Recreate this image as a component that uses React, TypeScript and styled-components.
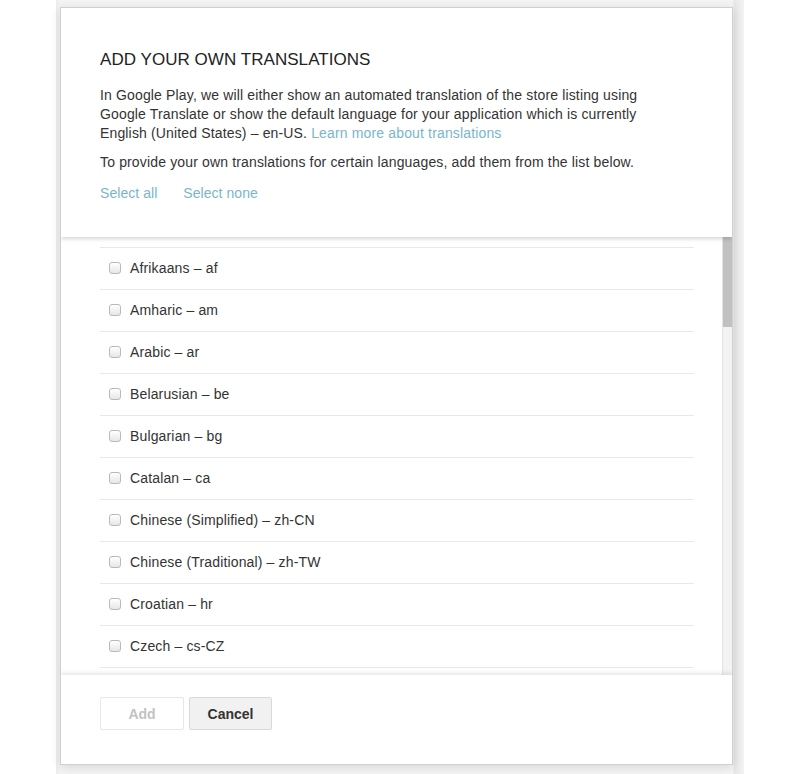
import React from "react";
import styled, { createGlobalStyle } from "styled-components";

const Global = createGlobalStyle`
  html, body { margin: 0; padding: 0; background: #ffffff; }
  body { font-family: "Liberation Sans", Arial, sans-serif; color: #333; }
  * { box-sizing: border-box; }
`;

const Page = styled.div`
  width: 800px;
  height: 774px;
  display: flex;
  background: #ffffff;
`;

const Backdrop = styled.div`
  margin-left: 56px;
  width: 688px;
  height: 774px;
  padding: 7px 11px 9px 4px;
  background: linear-gradient(90deg, #ececec 0px, #f4f4f4 4px, #f4f4f4 677px, #e6e6e6 678px, #f3f3f3 688px);
`;

const Dialog = styled.div`
  width: 673px;
  height: 758px;
  background: #fff;
  border: 1px solid #cfcfcf;
  box-shadow: 0 2px 10px rgba(0, 0, 0, 0.12);
  display: flex;
  flex-direction: column;
  overflow: hidden;
`;

const Header = styled.div`
  position: relative;
  z-index: 2;
  height: 229px;
  flex: none;
  padding: 41px 20px 0 39px;
  background: #fff;
  box-shadow: 0 2px 4px rgba(0, 0, 0, 0.16);
`;

const Title = styled.h1`
  margin: 0 0 15px;
  font-size: 17px;
  line-height: 22px;
  font-weight: normal;
  color: #222;
  letter-spacing: 0.05px;
`;

const Para = styled.p`
  margin: 0 0 10px;
  font-size: 14px;
  line-height: 19px;
  color: #333;
  letter-spacing: 0.15px;
  white-space: nowrap;
`;

const Link = styled.a`
  color: #7ab6c9;
  text-decoration: none;
  cursor: pointer;
`;

const SelectRow = styled.div`
  display: flex;
  gap: 26px;
  margin-top: 12px;
  font-size: 14px;
  line-height: 19px;
  letter-spacing: 0.05px;
`;

const Body = styled.div`
  flex: 1;
  min-height: 0;
  display: flex;
`;

const ListArea = styled.div`
  flex: 1;
  min-width: 0;
  overflow: hidden;
  padding: 10px 28px 0 39px;
`;

const Track = styled.div`
  width: 10px;
  flex: none;
  background: #f3f3f3;
  border-left: 1px solid #e4e4e4;
  display: flex;
  flex-direction: column;
`;

const Thumb = styled.div`
  height: 90px;
  background: #c1c1c1;
`;

const List = styled.ul`
  list-style: none;
  margin: 0;
  padding: 0;
  border-top: 1px solid #e8e8e8;
`;

const Row = styled.li`
  height: 42px;
  display: flex;
  align-items: center;
  gap: 9px;
  padding: 0 0 2px 9px;
  border-bottom: 1px solid #e8e8e8;
  font-size: 14px;
  color: #333;
  letter-spacing: 0.15px;
`;

const Box = styled.span`
  width: 12px;
  height: 12px;
  border-radius: 3px;
  border: 1px solid #b9b9b9;
  background: linear-gradient(#ffffff, #e6e6e6);
  box-shadow: inset 0 1px 1px rgba(255, 255, 255, 0.8);
  flex: none;
`;

const Footer = styled.div`
  position: relative;
  z-index: 2;
  height: 89px;
  flex: none;
  padding: 22px 39px 0;
  display: flex;
  align-items: flex-start;
  gap: 5px;
  background: #fff;
  box-shadow: 0 -2px 4px rgba(0, 0, 0, 0.1);
`;

const Button = styled.button<{ $disabled?: boolean }>`
  height: 33px;
  width: ${(p) => (p.$disabled ? "84px" : "83px")};
  font-family: "Liberation Sans", Arial, sans-serif;
  font-size: 14px;
  font-weight: bold;
  border-radius: 2px;
  border: 1px solid ${(p) => (p.$disabled ? "#e6e6e6" : "#d9d9d9")};
  background: ${(p) => (p.$disabled ? "#fff" : "#f1f1f1")};
  color: ${(p) => (p.$disabled ? "#c2c2c2" : "#333")};
  padding: 0;
`;

const languages = [
  "Afrikaans – af",
  "Amharic – am",
  "Arabic – ar",
  "Belarusian – be",
  "Bulgarian – bg",
  "Catalan – ca",
  "Chinese (Simplified) – zh-CN",
  "Chinese (Traditional) – zh-TW",
  "Croatian – hr",
  "Czech – cs-CZ",
];

export default function App() {
  return (
    <Page>
      <Global />
      <Backdrop>
        <Dialog>
          <Header>
            <Title>ADD YOUR OWN TRANSLATIONS</Title>
            <Para>
              In Google Play, we will either show an automated translation of the store listing using
              <br />
              Google Translate or show the default language for your application which is currently
              <br />
              English (United States) – en-US. <Link>Learn more about translations</Link>
            </Para>
            <Para>To provide your own translations for certain languages, add them from the list below.</Para>
            <SelectRow>
              <Link>Select all</Link>
              <Link>Select none</Link>
            </SelectRow>
          </Header>
          <Body>
            <ListArea>
              <List>
                {languages.map((l) => (
                  <Row key={l}>
                    <Box />
                    <span>{l}</span>
                  </Row>
                ))}
              </List>
            </ListArea>
            <Track>
              <Thumb />
            </Track>
          </Body>
          <Footer>
            <Button $disabled>Add</Button>
            <Button>Cancel</Button>
          </Footer>
        </Dialog>
      </Backdrop>
    </Page>
  );
}
